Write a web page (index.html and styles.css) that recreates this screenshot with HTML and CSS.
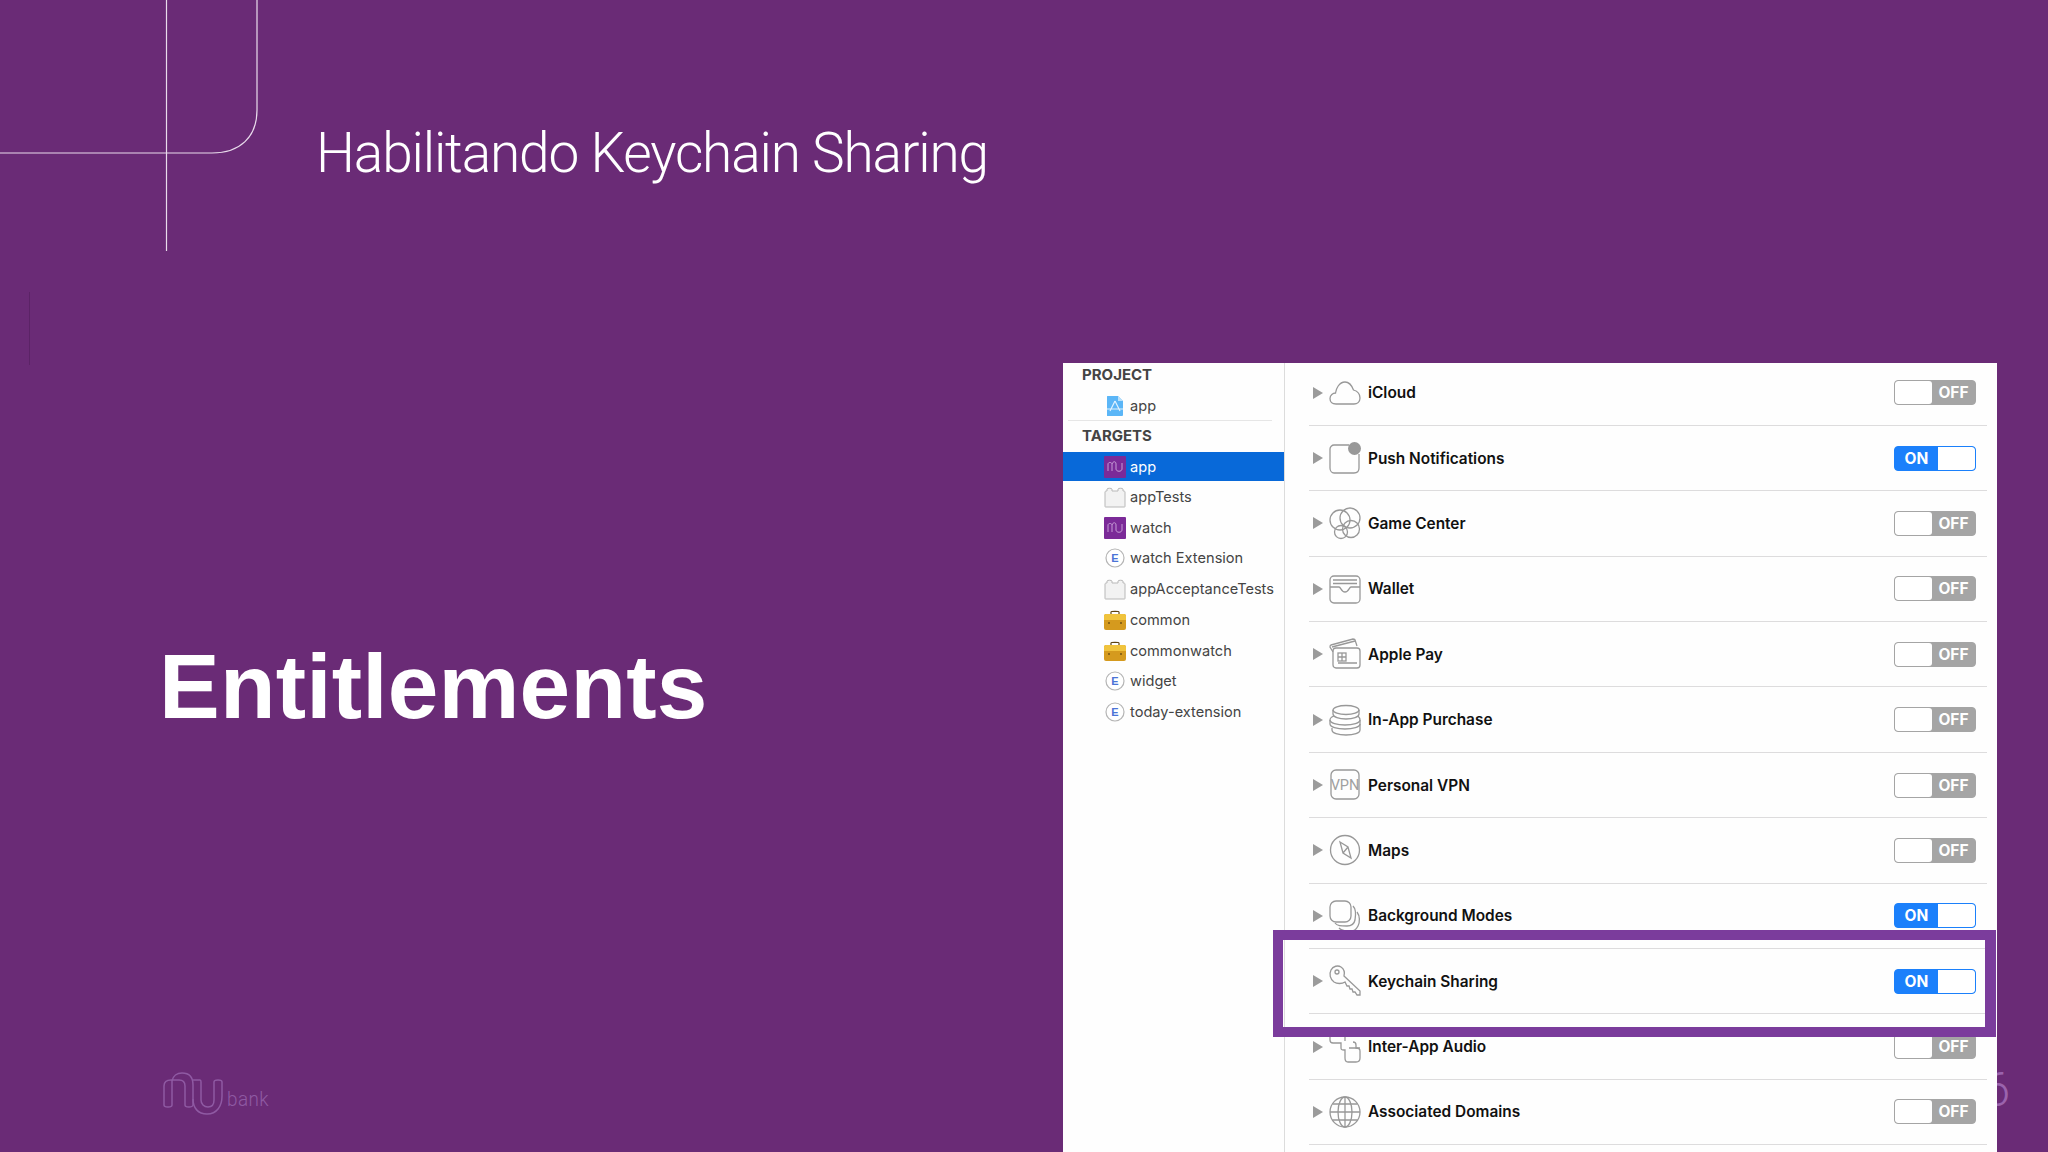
FILE: index.html
```html
<!DOCTYPE html>
<html lang="pt">
<head>
<meta charset="utf-8">
<title>Entitlements</title>
<link rel="stylesheet" href="styles.css">
</head>
<body>
<main class="slide">
  <svg class="decor" width="300" height="380" viewBox="0 0 300 380" aria-hidden="true">
    <path class="decor-line" d="M257 0V110C257 137 240 153 212 153H0"/>
    <path class="decor-line" d="M166.5 0V251"/>
    <path class="decor-dark" d="M29.5 292V365"/>
  </svg>
  <header class="title-bar"><h2 class="title">Habilitando Keychain Sharing</h2></header>
  <section class="left">
    <h1 class="heading">Entitlements</h1>
    <div class="brand">
      <svg class="brand-mark" width="60" height="43" viewBox="0 0 60 43" aria-hidden="true">
        <path d="M1 33V14C1 10 4 8 8 8H9V33C9 34 8 35 5 35C2 35 1 34 1 33Z"/>
        <path d="M9 9C10 4 14 1 19 1C27 1 30 6 30 13V33C30 34 28 35 26 35C23 35 22 34 22 33V14C22 10 20 8 16 8H9"/>
        <path d="M30 8H37C38 8 38 9 38 10V28C38 32 41 35 45 35C49 35 51 32 51 28V10C51 9 52 8 55 8C58 8 59 9 59 10V24C59 34 54 42 44 42C35 42 30 36 30 27"/>
      </svg>
      <span class="brand-name">bank</span>
    </div>
  </section>
  <span class="page-num">6</span>
  <section class="panel">
    <nav class="sidebar">
      <div class="side-head">PROJECT</div>
      <div class="side-row">
        <svg class="side-icon" viewBox="0 0 22 22"><path class="i-blue" d="M4 1H14L19 6V20C19 21 18 21 17 21H4C3 21 3 21 3 20V2C3 1 3 1 4 1Z"/><path class="i-blue-dark" d="M14 1L19 6H14Z"/><path class="i-white" d="M11 6L16 16M11 6L6 16M3 14H19"/></svg>
        <span>app</span>
      </div>
      <div class="side-rule"></div>
      <div class="side-head">TARGETS</div>
      <div class="side-row side-row-on">
        <svg class="side-icon" viewBox="0 0 22 22"><rect class="i-nu" width="22" height="22" rx="1"/><path class="i-nu-line" d="M4 15V8C4 6 8 6 8 8V15M8 8C9 5 12 5 12 8V13C12 16 18 16 18 13V7"/></svg>
        <span>app</span>
      </div>
      <div class="side-row">
        <svg class="side-icon" viewBox="0 0 22 22"><path class="i-lego" d="M1 6C1 5 2 5 3 5V3C3 2 8 2 8 3V5H14V3C14 2 19 2 19 3V5C20 5 21 5 21 6V20C21 21 21 21 20 21H2C1 21 1 21 1 20Z"/></svg>
        <span>appTests</span>
      </div>
      <div class="side-row">
        <svg class="side-icon" viewBox="0 0 22 22"><rect class="i-nu" width="22" height="22" rx="1"/><path class="i-nu-line" d="M4 15V8C4 6 8 6 8 8V15M8 8C9 5 12 5 12 8V13C12 16 18 16 18 13V7"/></svg>
        <span>watch</span>
      </div>
      <div class="side-row">
        <svg class="side-icon" viewBox="0 0 22 22"><circle class="i-ring" cx="11" cy="11" r="9"/><text class="i-e" x="11" y="15">E</text></svg>
        <span>watch Extension</span>
      </div>
      <div class="side-row">
        <svg class="side-icon" viewBox="0 0 22 22"><path class="i-lego" d="M1 6C1 5 2 5 3 5V3C3 2 8 2 8 3V5H14V3C14 2 19 2 19 3V5C20 5 21 5 21 6V20C21 21 21 21 20 21H2C1 21 1 21 1 20Z"/></svg>
        <span>appAcceptanceTests</span>
      </div>
      <div class="side-row">
        <svg class="side-icon" viewBox="0 0 22 22"><path class="i-handle" d="M7 5V3C7 2 15 2 15 3V5"/><rect class="i-case" y="5" width="22" height="16" rx="2"/><path class="i-case-top" d="M0 7C0 6 1 5 2 5H20C21 5 22 6 22 7V11H0Z"/><path class="i-handle" d="M5 13v2M17 13v2"/></svg>
        <span>common</span>
      </div>
      <div class="side-row">
        <svg class="side-icon" viewBox="0 0 22 22"><path class="i-handle" d="M7 5V3C7 2 15 2 15 3V5"/><rect class="i-case" y="5" width="22" height="16" rx="2"/><path class="i-case-top" d="M0 7C0 6 1 5 2 5H20C21 5 22 6 22 7V11H0Z"/><path class="i-handle" d="M5 13v2M17 13v2"/></svg>
        <span>commonwatch</span>
      </div>
      <div class="side-row">
        <svg class="side-icon" viewBox="0 0 22 22"><circle class="i-ring" cx="11" cy="11" r="9"/><text class="i-e" x="11" y="15">E</text></svg>
        <span>widget</span>
      </div>
      <div class="side-row">
        <svg class="side-icon" viewBox="0 0 22 22"><circle class="i-ring" cx="11" cy="11" r="9"/><text class="i-e" x="11" y="15">E</text></svg>
        <span>today-extension</span>
      </div>
    </nav>
    <div class="caps">
      <div class="cap">
        <i class="tri"></i>
        <svg class="cap-icon" viewBox="0 0 32 32"><path d="M7 27C3 27 1 25 1 21.500C1 18 4 16 6.500 16C7 12 10 5 16 5C21 5 23 9 24.500 13C28 14 31 17 31 21C31 25 28 27 25 27Z"/></svg>
        <span class="cap-name">iCloud</span>
        <span class="toggle off"><b class="knob"></b><b class="lbl">OFF</b></span>
      </div>
      <div class="cap">
        <i class="tri"></i>
        <svg class="cap-icon" viewBox="0 0 32 32"><path d="M20 3H5C3 3 1 5 1 7V26C1 29 3 31 5 31H25C28 31 30 29 30 26V12"/><circle class="fill" cx="25.500" cy="6.500" r="6.500"/></svg>
        <span class="cap-name">Push Notifications</span>
        <span class="toggle on"><b class="lbl">ON</b><b class="knob"></b></span>
      </div>
      <div class="cap">
        <i class="tri"></i>
        <svg class="cap-icon" viewBox="0 0 32 32"><circle cx="11" cy="13" r="10"/><circle cx="21" cy="11" r="10"/><circle cx="22" cy="22" r="8.500"/><circle cx="12" cy="25" r="6.500"/></svg>
        <span class="cap-name">Game Center</span>
        <span class="toggle off"><b class="knob"></b><b class="lbl">OFF</b></span>
      </div>
      <div class="cap">
        <i class="tri"></i>
        <svg class="cap-icon" viewBox="0 0 32 32"><rect x="1" y="3" width="30" height="27" rx="4"/><path d="M4 7H28M4 10.500H28M1 14H10C12 14 12 19 16 19C20 19 20 14 22 14H31"/></svg>
        <span class="cap-name">Wallet</span>
        <span class="toggle off"><b class="knob"></b><b class="lbl">OFF</b></span>
      </div>
      <div class="cap">
        <i class="tri"></i>
        <svg class="cap-icon" viewBox="0 0 32 32"><path d="M4 14L1 9C1 8 1 7 2 7L24 1C25 1 26 1 26 2L28 8"/><path d="M3 9L26 3"/><rect x="4" y="10" width="27" height="20" rx="3"/><rect x="9" y="15" width="8" height="8"/><path d="M13 15V23M9 19H17M9 25H28"/></svg>
        <span class="cap-name">Apple Pay</span>
        <span class="toggle off"><b class="knob"></b><b class="lbl">OFF</b></span>
      </div>
      <div class="cap">
        <i class="tri"></i>
        <svg class="cap-icon" viewBox="0 0 32 32"><ellipse cx="17" cy="6" rx="13" ry="4.500"/><path d="M4 6V10C4 13 10 15 17 15C24 15 30 13 30 10V6"/><path d="M5 12C2 13 1 14 1 16C1 19 8 21 16 21C24 21 31 19 31 16C31 14 30 13 29 12"/><path d="M1 16V20C1 23 8 25 16 25C24 25 31 23 31 20V16"/><path d="M3 24V26C3 29 9 31 17 31C25 31 31 29 31 26V20"/></svg>
        <span class="cap-name">In-App Purchase</span>
        <span class="toggle off"><b class="knob"></b><b class="lbl">OFF</b></span>
      </div>
      <div class="cap">
        <i class="tri"></i>
        <svg class="cap-icon" viewBox="0 0 32 32"><rect x="2" y="1" width="28" height="29" rx="5"/><text class="vpn" x="16" y="21">VPN</text></svg>
        <span class="cap-name">Personal VPN</span>
        <span class="toggle off"><b class="knob"></b><b class="lbl">OFF</b></span>
      </div>
      <div class="cap">
        <i class="tri"></i>
        <svg class="cap-icon" viewBox="0 0 32 32"><circle cx="16" cy="16" r="14.500"/><path d="M11 8L19 13L22 24L14 19ZM19 13L14 19"/></svg>
        <span class="cap-name">Maps</span>
        <span class="toggle off"><b class="knob"></b><b class="lbl">OFF</b></span>
      </div>
      <div class="cap">
        <i class="tri"></i>
        <svg class="cap-icon" viewBox="0 0 32 32"><rect x="1" y="1" width="21" height="21" rx="6"/><path d="M24 6C27 9 27 14 26 20C25 25 22 26 18 26C12 26 8 26 6 23"/><path d="M28 12C31 16 31 22 29 26C27 30 24 32 19 31C15 31 12 30 10 28"/></svg>
        <span class="cap-name">Background Modes</span>
        <span class="toggle on"><b class="lbl">ON</b><b class="knob"></b></span>
      </div>
      <div class="cap">
        <i class="tri"></i>
        <svg class="cap-icon" viewBox="0 0 32 32"><path d="M2 5C4 1 9 0 12 2C15 4 16 7 15 11L31 26V30H28L26 27L24 27L23 24L21 24L20 21L18 21L16 17C13 19 8 19 5 17C1 14 0 9 2 5Z"/><circle cx="8" cy="7" r="2"/></svg>
        <span class="cap-name">Keychain Sharing</span>
        <span class="toggle on"><b class="lbl">ON</b><b class="knob"></b></span>
      </div>
      <div class="cap">
        <i class="tri"></i>
        <svg class="cap-icon" viewBox="0 0 32 32"><path d="M1 2V9C1 11 2 12 4 12H12V17C12 19 13 19 15 19H16V27C16 30 17 31 19 31H27C30 31 31 30 31 27V20C31 18 30 17 27 17V14C27 12 26 11 24 11"/><path d="M20 17H31M16 2V10"/></svg>
        <span class="cap-name">Inter-App Audio</span>
        <span class="toggle off"><b class="knob"></b><b class="lbl">OFF</b></span>
      </div>
      <div class="cap">
        <i class="tri"></i>
        <svg class="cap-icon" viewBox="0 0 32 32"><circle cx="16" cy="16" r="15"/><ellipse cx="16" cy="16" rx="7" ry="15"/><path d="M16 1V31M1 16H31M3.500 8H28.500M3.500 24H28.500"/></svg>
        <span class="cap-name">Associated Domains</span>
        <span class="toggle off"><b class="knob"></b><b class="lbl">OFF</b></span>
      </div>
    </div>
    <div class="highlight"></div>
  </section>
</main>
</body>
</html>
```

FILE: styles.css
```css
* { box-sizing: border-box; }
html, body { margin: 0; padding: 0; }
body { background: #6a2b76; }

.slide {
  position: relative;
  width: 2048px;
  height: 1152px;
  overflow: hidden;
  display: grid;
  grid-template-columns: 1063px 934px 51px;
  grid-template-rows: 363px 789px;
  background: #6a2b76;
  font-family: Inter, "Liberation Sans", sans-serif;
}

/* Decorative lines and page number */
.decor { position: absolute; left: 0; top: 0; }
.decor-line { fill: none; stroke: #e9dcec; stroke-width: 1.2; }
.decor-dark { fill: none; stroke: #5b2366; stroke-width: 1; }
.page-num {
  position: absolute;
  right: 38px;
  top: 1061px;
  font: 300 48px/58px Roboto, sans-serif;
  color: #9a63ad;
}

/* Title */
.title-bar { grid-column: 1 / -1; padding: 120px 0 0 316px; }
.title {
  margin: 0;
  font: 300 55px/66px Roboto, "Liberation Sans", sans-serif;
  letter-spacing: -1.15px;
  color: #fff;
}

/* Left column */
.left {
  grid-column: 1;
  grid-row: 2;
  padding: 269px 0 20px 159px;
  display: flex;
  flex-direction: column;
}
.heading {
  margin: 0;
  font: 700 91px/110px "Liberation Sans", sans-serif;
  letter-spacing: 0.2px;
  color: #fff;
}
.brand {
  margin-top: auto;
  margin-left: 4px;
  display: flex;
  align-items: flex-end;
  gap: 4px;
  height: 44px;
  margin-bottom: 17px;
}
.brand-mark path { fill: none; stroke: #8f5aa3; stroke-width: 1.5; }
.brand-name {
  font: 300 21px/26px Roboto, sans-serif;
  color: #8f5aa3;
  letter-spacing: 0.5px;
  position: relative;
  top: -3px;
  transform: scaleX(0.9);
  transform-origin: left;
}

/* Panel */
.panel {
  grid-column: 2;
  grid-row: 2;
  position: relative;
  z-index: 1;
  display: flex;
  background: #fefefe;
  overflow: hidden;
}

/* Sidebar */
.sidebar {
  width: 222px;
  flex: none;
  border-right: 1px solid #dcdcdc;
  font-size: 14.6px;
  color: #444;
}
.side-head {
  height: 30.7px;
  line-height: 30.7px;
  padding-left: 19px;
  font-weight: 700;
  font-size: 15px;
  color: #444;
  margin-top: -3.5px;
}
.side-rule + .side-head { margin-top: 0.5px; }
.side-row {
  height: 30.7px;
  display: flex;
  align-items: center;
  gap: 4px;
  padding-left: 41px;
}
.side-row-on {
  height: 29px;
  margin-bottom: 0.7px;
  background: #0869d9;
  color: #fff;
}
.side-rule {
  height: 1px;
  margin: -1px 12px 0 5px;
  background: #e6e6e6;
}
.side-icon { width: 22px; height: 22px; flex: none; }
.i-blue { fill: #5bb6f7; }
.i-blue-dark { fill: #b9e0fb; }
.i-white { fill: none; stroke: #dff1fe; stroke-width: 1.2; }
.i-nu { fill: #7b2a98; }
.i-nu-line { fill: none; stroke: #c69bd6; stroke-width: 1; }
.i-lego { fill: #f2f2f2; stroke: #b8b8b8; stroke-width: 1; }
.i-ring { fill: #fff; stroke: #b5b5b5; stroke-width: 1.2; }
.i-e { font: 700 11px "Liberation Sans", sans-serif; fill: #4b74d6; text-anchor: middle; }
.i-case { fill: #d59a1e; }
.i-case-top { fill: #f0c33c; }
.i-handle { fill: none; stroke: #5e4310; stroke-width: 1.2; }

/* Capability rows */
.caps {
  flex: 1;
  margin-top: -2.5px;
  padding: 0 10px 0 24px;
}
.cap {
  height: 65.4px;
  display: flex;
  align-items: center;
  border-bottom: 1.5px solid #dddcdd;
}
.tri {
  width: 0;
  height: 0;
  margin-left: 4px;
  flex: none;
  border-left: 10px solid #9b9b9b;
  border-top: 6px solid transparent;
  border-bottom: 6px solid transparent;
}
.cap-icon {
  width: 32px;
  height: 32px;
  flex: none;
  margin-left: 6px;
  overflow: visible;
  fill: none;
  stroke: #989898;
  stroke-width: 1.3;
}
.cap-icon .fill { fill: #989898; stroke: none; }
.cap-icon .vpn {
  font: 400 14.5px Roboto, sans-serif;
  fill: #a0a0a0;
  stroke: none;
  text-anchor: middle;
}
.cap-name {
  margin-left: 7px;
  font-size: 15.4px;
  font-weight: 600;
  color: #111;
}
.toggle {
  margin-left: auto;
  margin-right: 11px;
  width: 82px;
  height: 25px;
  display: flex;
  flex: none;
  border-radius: 4px;
  overflow: hidden;
  border: 1.5px solid;
  font-size: 15.5px;
  color: #fff;
}
.toggle b { display: block; font-weight: 700; }
.toggle .lbl { line-height: 23px; text-align: center; }
.toggle .knob { background: #fff; }
.off { border-color: #a5a5a5; background: #a5a5a5; }
.off .knob { width: 37px; border-radius: 3px; }
.off .lbl { flex: 1; }
.on { border-color: #1b80fb; background: #1b80fb; }
.on .lbl { width: 43px; }
.on .knob { flex: 1; border-radius: 0 3px 3px 0; }

/* Highlight frame */
.highlight {
  position: absolute;
  left: 210px;
  top: 567px;
  width: 723px;
  height: 107px;
  border: 10.5px solid #7b3c9c;
  border-right-width: 11px;
}
```
